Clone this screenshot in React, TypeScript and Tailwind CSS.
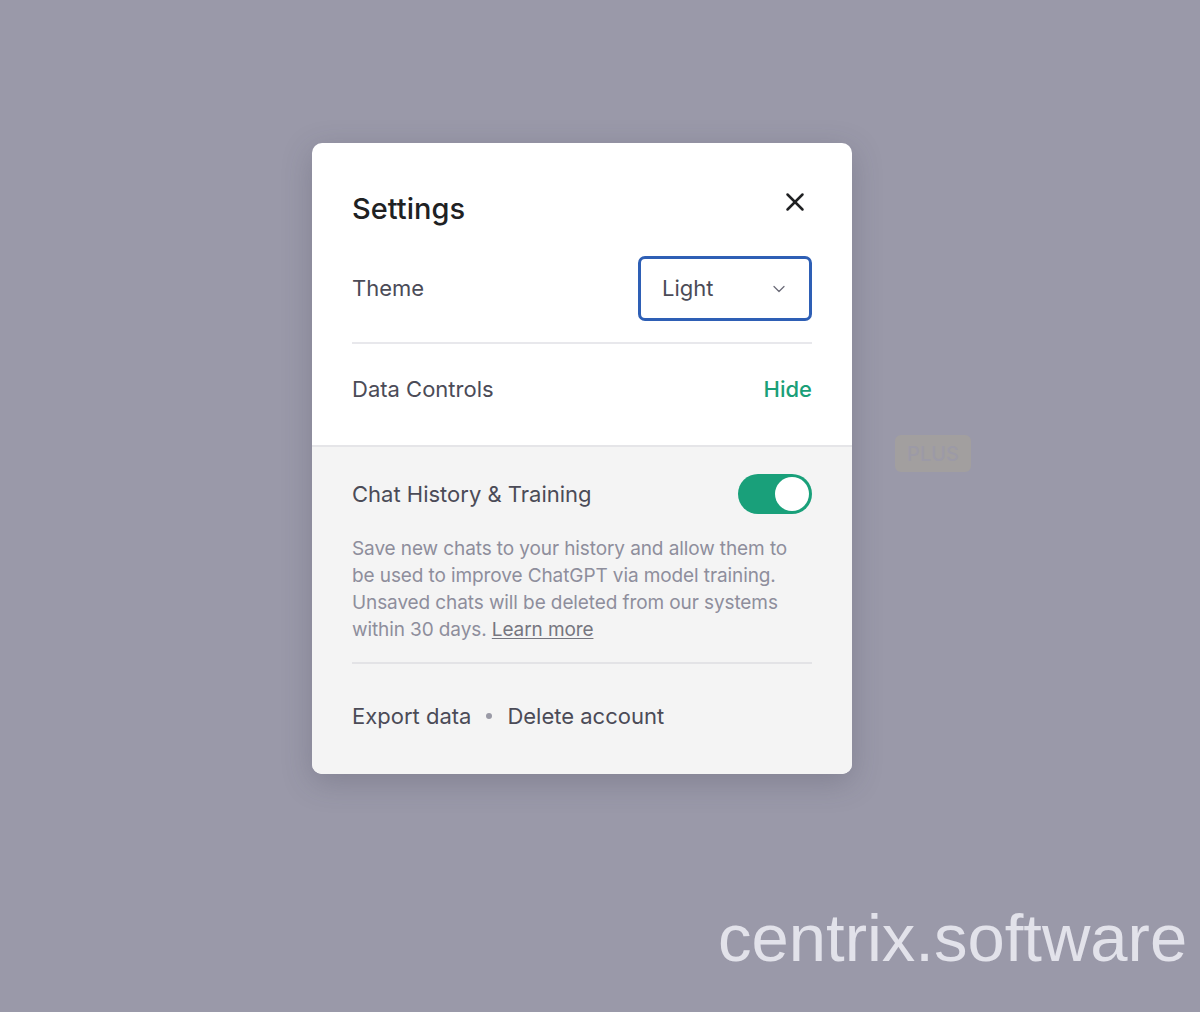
import { X, ChevronDown } from 'lucide-react'

export default function App() {
    return (
        <div
            className="relative w-[1200px] h-[1012px] bg-[#9a99a9] overflow-hidden"
            style={{ fontFamily: 'Inter, "Noto Sans", sans-serif' }}
        >
            {/* Ghost content behind the overlay */}
            <div className="absolute left-[895px] top-[435px] w-[76px] h-[37px] rounded-md bg-[#a29f9f] flex items-center justify-center text-[20px] text-[#9c9aa6] font-medium">
                PLUS
            </div>

            <div className="pl-[312px] pt-[143px]">
                {/* Modal */}
                <div className="relative w-[540px] rounded-[10px] overflow-hidden bg-white shadow-[0_8px_30px_rgba(60,60,80,0.25)]">
                    {/* Top section */}
                    <div className="px-[40px] pt-[49px]">
                        <div className="flex items-center justify-between">
                            <h2 className="text-[29px] leading-[34px] font-medium text-[#202123]">Settings</h2>
                            <button className="-mt-[14px] mr-[2px] text-[#202123]">
                                <X size={30} strokeWidth={2} />
                            </button>
                        </div>

                        <div className="mt-[30px] flex items-center justify-between">
                            <span className="text-[22px] text-[#4b4b57]">Theme</span>
                            <div className="w-[174px] h-[65px] rounded-[7px] border-[3px] border-[#2e5fb5] flex items-center justify-between pl-[21px] pr-[20px]">
                                <span className="text-[22px] text-[#4b4b57]">Light</span>
                                <ChevronDown size={20} strokeWidth={1.5} className="text-[#6b6b78]" />
                            </div>
                        </div>

                        <div className="mt-[21px] h-[2px] bg-[#e8e8ec]" />

                        <div className="mt-[31px] pb-[42px] flex items-center justify-between">
                            <span className="text-[22px] leading-[28px] text-[#4b4b57]">Data Controls</span>
                            <span className="text-[22px] leading-[28px] font-medium text-[#1a9f78]">Hide</span>
                        </div>
                    </div>

                    {/* Data controls section */}
                    <div className="border-t-2 border-[#e5e5e8] bg-[#f4f4f4] px-[40px] pt-[27px] pb-[44px]">
                        <div className="flex items-center justify-between">
                            <span className="text-[22px] text-[#4b4b57]">Chat History &amp; Training</span>
                            <div className="w-[74px] h-[40px] rounded-full bg-[#19a07a] flex items-center justify-end pr-[3px]">
                                <div className="w-[34px] h-[34px] rounded-full bg-white" />
                            </div>
                        </div>

                        <p className="mt-[21px] w-[442px] text-[19px] leading-[27px] tracking-[-0.1px] text-[#8e8e9c]">
                            Save new chats to your history and allow them to be used to improve ChatGPT via model
                            training. Unsaved chats will be deleted from our systems within 30 days.{' '}
                            <span className="underline underline-offset-2 text-[#76767f]">Learn more</span>
                        </p>

                        <div className="mt-[19px] h-[2px] bg-[#e3e3e6]" />

                        <div className="mt-[38px] flex items-center gap-[15px] text-[22px] leading-[28px] text-[#4b4b57]">
                            <span>Export data</span>
                            <span className="w-[6px] h-[6px] rounded-full bg-[#9a9aa6]" />
                            <span>Delete account</span>
                        </div>
                    </div>
                </div>
            </div>

            {/* Watermark */}
            <div
                className="absolute left-[718px] top-[898px] text-[67px] leading-[80px] text-[#e2e2ea]"
                style={{ fontFamily: '"Liberation Sans", Arial, sans-serif' }}
            >
                centrix.software
            </div>
        </div>
    )
}
